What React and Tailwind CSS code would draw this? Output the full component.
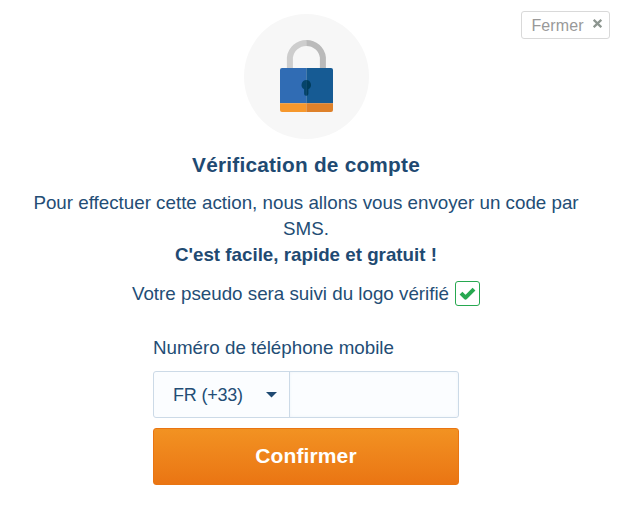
function LockIcon() {
  return (
    <svg className="block" width="125" height="125" viewBox="0 0 125 125">
      <path d="M45.9 56V43.5A16.6 16.6 0 0 1 62.5 28.9" fill="none" stroke="#cdcdcd" strokeWidth="6" />
      <path d="M62.3 28.9A16.6 16.6 0 0 1 78.9 43.5V56" fill="none" stroke="#bababa" strokeWidth="6" />
      <path d="M62.3 54H38a2 2 0 0 0-2 2v33.300h26.300z" fill="#306cb4" />
      <path d="M62.300 54H87a2 2 0 0 1 2 2v33.300H62.300z" fill="#165b94" />
      <path d="M36 89.300h26.300V98H38a2 2 0 0 1-2-2z" fill="#f6982d" />
      <path d="M62.300 89.300H89V96a2 2 0 0 1-2 2H62.300z" fill="#de812a" />
      <path d="M62.300 66a4.900 4.900 0 0 0-2.200 9.200v4.500a2 2 0 0 0 2.200 2z" fill="#05446b" />
      <path d="M62.300 66a4.900 4.900 0 0 1 2.100 9.200v4.500a2 2 0 0 1-2.100 2z" fill="#003c5c" />
    </svg>
  );
}

export default function App() {
  return (
    <main className="relative flex h-[511px] w-[620px] flex-col items-center overflow-hidden bg-white pt-[14px] pr-[7px] font-['Liberation_Sans',Arial,sans-serif] text-[#234d75]">
      <button className="absolute top-[11px] left-[521px] flex h-[28px] w-[89px] items-center rounded-[3px] border border-[#d9d9d9] pt-px pl-[9px] text-[16px] text-[#999999]">
        <span className="w-[53px] tracking-[0.1px] whitespace-nowrap">Fermer</span>
        <svg className="mb-[4px] ml-[9px]" width="9" height="9" viewBox="0 0 9 9">
          <path d="M0.700 0.800L8.300 8.200M8.300 0.800L0.700 8.200" stroke="#8d9690" strokeWidth="2.300" />
        </svg>
      </button>

      <div className="h-[125px] w-[125px] shrink-0 rounded-full bg-[#f7f7f7]">
        <LockIcon />
      </div>

      <h1 className="mt-[13px] mr-px text-[20.800px] leading-[26px] font-bold tracking-[0.220px] whitespace-nowrap text-[#1f4a72]">Vérification de compte</h1>

      <p className="mt-[12px] mr-px text-center text-[18.770px] leading-[26px] whitespace-nowrap">
        <span className="block">Pour effectuer cette action, nous allons vous envoyer un code par</span>
        <span className="block">SMS.</span>
        <strong className="block text-[#1f4a72]">C'est facile, rapide et gratuit !</strong>
      </p>

      <p className="mt-[13px] mr-px flex h-[26px] items-start text-[18.770px] leading-[26px] whitespace-nowrap">
        <span>Votre pseudo sera suivi du logo vérifié</span>
        <span className="ml-[6px] flex h-[25px] w-[25px] items-center justify-center rounded-[3px] border border-[#27a850]">
          <svg width="17" height="14" viewBox="0 0 17 14">
            <path d="M2 6.200L6.500 10.700L15 2.200" fill="none" stroke="#27a850" strokeWidth="4" strokeLinejoin="round" />
          </svg>
        </span>
      </p>

      <form className="mt-[28px] mr-px flex w-[306px] flex-col">
        <label className="text-[18.770px] leading-[26px] whitespace-nowrap">Numéro de téléphone mobile</label>
        <div className="mt-[10px] flex h-[47px] rounded-[3px] border border-[#ccdae7] bg-[#fbfdff]">
          <div className="flex w-[136px] items-center justify-between border-r border-[#ccdae7] pr-[12px] pl-[19px] text-[18px] whitespace-nowrap">
            <span className="pt-[2px] tracking-[-0.200px]">FR (+33)</span>
            <svg width="11" height="6" viewBox="0 0 11 6">
              <path d="M0 0H11L5.500 5.500Z" fill="#1f4a72" />
            </svg>
          </div>
          <div className="flex-1 rounded-r-[3px] shadow-[inset_0_0_3px_#edf2f8]" />
        </div>
        <button type="button" className="mt-[10px] h-[57px] rounded-[3px] border border-[#e97512] bg-linear-to-b from-[#f29222] to-[#ea7513] pb-[2px] text-[21px] leading-[26px] font-bold tracking-[0.120px] whitespace-nowrap text-white">
          Confirmer
        </button>
      </form>
    </main>
  );
}
